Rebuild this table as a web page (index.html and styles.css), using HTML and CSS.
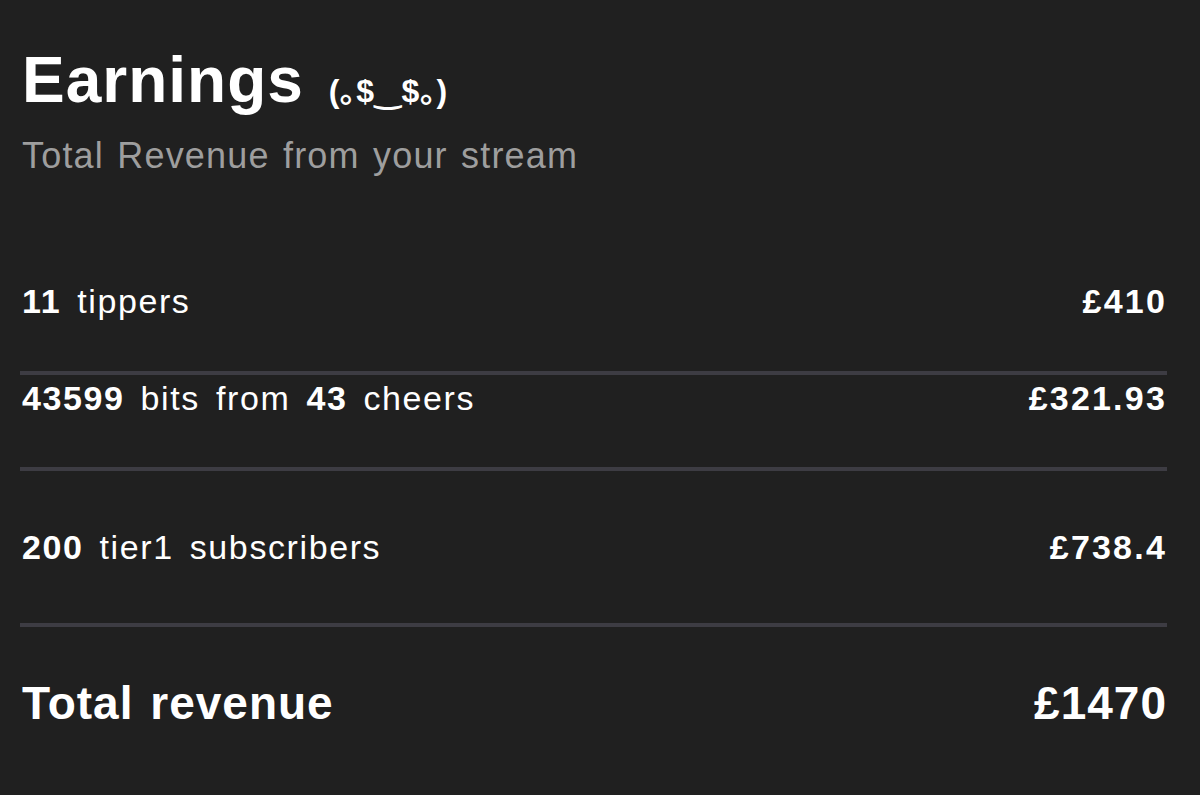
FILE: index.html
```html
<!DOCTYPE html>
<html lang="en">
<head>
    <meta charset="UTF-8">
    <meta name="viewport" content="width=device-width, initial-scale=1.0">
    <title>Earnings</title>
    <link rel="stylesheet" href="styles.css">
</head>
<body>
    <div id="earnings">
        <div class="header">
            <h1 class="title">Earnings <span class="kaomoji">(｡$‿$｡)</span></h1>
            <p class="subtitle">Total Revenue from your stream</p>
        </div>
        <div class="rows">
            <div class="row row-tips">
                <span class="label"><b>11</b> tippers</span>
                <span class="amount">£410</span>
            </div>
            <div class="row row-bits">
                <span class="label"><b>43599</b> bits from <b>43</b> cheers</span>
                <span class="amount">£321.93</span>
            </div>
            <div class="row row-subs">
                <span class="label"><b>200</b> tier1 subscribers</span>
                <span class="amount">£738.4</span>
            </div>
            <div class="row row-total">
                <span class="label">Total revenue</span>
                <span class="amount">£1470</span>
            </div>
        </div>
    </div>
</body>
</html>
```

FILE: styles.css
```css
body {
    margin: 0;
    background-color: #202020;
    color: #ffffff;
    font-family: "Liberation Sans", Arial, "Noto Sans CJK JP", sans-serif;
}

#earnings {
    padding: 48px 33px 0 20px;
}

.header {
    padding-left: 2px;
}

.title {
    margin: 0;
    font-size: 64px;
    line-height: 64px;
    font-weight: bold;
    letter-spacing: 1px;
}

.kaomoji {
    margin-left: 6px;
    font-size: 32px;
    font-weight: bold;
    letter-spacing: 0.5px;
    font-family: "Liberation Sans", "DejaVu Sans", "Noto Sans CJK JP", sans-serif;
}

.subtitle {
    margin: 13px 0 0;
    font-size: 36px;
    line-height: 40px;
    color: #9e9e9e;
    letter-spacing: 1.2px;
    word-spacing: 2px;
}

.rows {
    margin-top: 55px;
}

.row {
    display: flex;
    justify-content: space-between;
    align-items: center;
    font-size: 34px;
    line-height: 40px;
    letter-spacing: 1.6px;
    border-bottom: 4px solid #3d3c43;
}

.row .label {
    padding-left: 2px;
    word-spacing: 5px;
}

.row .amount {
    font-weight: bold;
    letter-spacing: 2.2px;
}

.row-tips {
    padding: 50px 0;
}

.row-bits {
    padding: 3px 0 49px;
}

.row-subs {
    padding: 56px 0;
}

.row-total {
    padding: 48px 0 40px;
    border-bottom: none;
    font-size: 46px;
    line-height: 56px;
    font-weight: bold;
    letter-spacing: 1px;
}

.row-total .label {
    word-spacing: 3px;
}

.row-total .amount {
    letter-spacing: 1px;
}
```
